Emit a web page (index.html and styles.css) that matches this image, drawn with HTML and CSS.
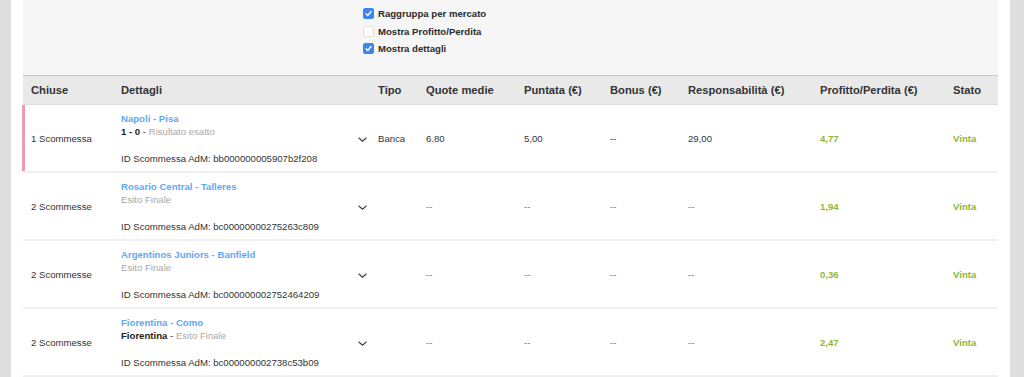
FILE: index.html
```html
<!DOCTYPE html>
<html lang="it">
<head>
  <meta charset="UTF-8" />
  <title>Scommesse chiuse</title>
  <link rel="stylesheet" href="styles.css">
</head>
<body>
  <div class="page">
    <div class="filters">
      <label class="check"><span class="box on"><svg viewBox="0 0 10 10"><path d="M2.3 5.2 L4.2 7.2 L7.8 2.8" /></svg></span>Raggruppa per mercato</label>
      <label class="check"><span class="box"></span>Mostra Profitto/Perdita</label>
      <label class="check"><span class="box on"><svg viewBox="0 0 10 10"><path d="M2.3 5.2 L4.2 7.2 L7.8 2.8" /></svg></span>Mostra dettagli</label>
    </div>

    <div class="table">
      <div class="row head">
        <div class="cell">Chiuse</div>
        <div class="cell">Dettagli</div>
        <div class="cell toggle"></div>
        <div class="cell">Tipo</div>
        <div class="cell">Quote medie</div>
        <div class="cell">Puntata (€)</div>
        <div class="cell">Bonus (€)</div>
        <div class="cell">Responsabilità (€)</div>
        <div class="cell">Profitto/Perdita (€)</div>
        <div class="cell">Stato</div>
      </div>

      <div class="row open">
        <div class="cell">1 Scommessa</div>
        <div class="cell details">
          <a class="event">Napoli - Pisa</a>
          <div class="market"><b>1 - 0</b> - <span>Risultato esatto</span></div>
          <div class="bet-id">ID Scommessa AdM: bb000000005907b2f208</div>
        </div>
        <div class="cell toggle"><svg viewBox="0 0 12 8"><path d="M1.5 2 L6 6 L10.5 2" /></svg></div>
        <div class="cell">Banca</div>
        <div class="cell">6.80</div>
        <div class="cell">5,00</div>
        <div class="cell">--</div>
        <div class="cell">29,00</div>
        <div class="cell win">4,77</div>
        <div class="cell win">Vinta</div>
      </div>

      <div class="row">
        <div class="cell">2 Scommesse</div>
        <div class="cell details">
          <a class="event">Rosario Central - Talleres</a>
          <div class="market"><span>Esito Finale</span></div>
          <div class="bet-id">ID Scommessa AdM: bc00000000275263c809</div>
        </div>
        <div class="cell toggle"><svg viewBox="0 0 12 8"><path d="M1.5 2 L6 6 L10.5 2" /></svg></div>
        <div class="cell"></div>
        <div class="cell dash">--</div>
        <div class="cell dash">--</div>
        <div class="cell dash">--</div>
        <div class="cell dash">--</div>
        <div class="cell win">1,94</div>
        <div class="cell win">Vinta</div>
      </div>

      <div class="row">
        <div class="cell">2 Scommesse</div>
        <div class="cell details">
          <a class="event">Argentinos Juniors - Banfield</a>
          <div class="market"><span>Esito Finale</span></div>
          <div class="bet-id">ID Scommessa AdM: bc000000002752464209</div>
        </div>
        <div class="cell toggle"><svg viewBox="0 0 12 8"><path d="M1.5 2 L6 6 L10.5 2" /></svg></div>
        <div class="cell"></div>
        <div class="cell dash">--</div>
        <div class="cell dash">--</div>
        <div class="cell dash">--</div>
        <div class="cell dash">--</div>
        <div class="cell win">0,36</div>
        <div class="cell win">Vinta</div>
      </div>

      <div class="row">
        <div class="cell">2 Scommesse</div>
        <div class="cell details">
          <a class="event">Fiorentina - Como</a>
          <div class="market"><b>Fiorentina</b> - <span>Esito Finale</span></div>
          <div class="bet-id">ID Scommessa AdM: bc000000002738c53b09</div>
        </div>
        <div class="cell toggle"><svg viewBox="0 0 12 8"><path d="M1.5 2 L6 6 L10.5 2" /></svg></div>
        <div class="cell"></div>
        <div class="cell dash">--</div>
        <div class="cell dash">--</div>
        <div class="cell dash">--</div>
        <div class="cell dash">--</div>
        <div class="cell win">2,47</div>
        <div class="cell win">Vinta</div>
      </div>
    </div>
  </div>
</body>
</html>
```

FILE: styles.css
```css
body {
  margin: 0;
  background: #dedede;
  font-family: "Liberation Sans", Arial, sans-serif;
  font-size: 9.6px;
  color: #333;
  height: 377px;
  overflow: hidden;
}

.page {
  margin: 0 14px 0 11px;
  padding: 0 12px;
  background: #fff;
  min-height: 377px;
}

.filters {
  background: #f6f6f6;
  height: 75px;
  box-sizing: border-box;
  padding: 5px 0 0 340px;
  display: flex;
  flex-direction: column;
}

.check {
  display: flex;
  align-items: center;
  gap: 4px;
  height: 17.5px;
  font-weight: bold;
  color: #2b2b2b;
}

.box {
  width: 9px;
  height: 9px;
  border-radius: 2px;
  background: #fff;
  border: 1px solid #e2e2e2;
  display: flex;
}

.box.on {
  background: #3d86ee;
  border-color: #3d86ee;
}

.box svg {
  width: 9px;
  height: 9px;
  fill: none;
  stroke: #fff;
  stroke-width: 1.5;
  stroke-linecap: round;
  stroke-linejoin: round;
}

.row {
  display: grid;
  grid-template-columns: 90px 242px 15px 48px 98px 86px 78px 132px 133px 52px;
  align-items: center;
  height: 68px;
  box-sizing: border-box;
  border-bottom: 2px solid #efefef;
}

.row.head {
  height: 30px;
  background: #e9e9ea;
  border-top: 1px solid #c9c9ca;
  border-bottom: 1px solid #dcdcdc;
  font-size: 11.2px;
  font-weight: bold;
  color: #333;
}

.row.open {
  box-shadow: inset 3px 0 0 #ec9cad;
  margin-left: -1px;
  padding-left: 1px;
}

.cell {
  padding-left: 8px;
  white-space: nowrap;
}

.cell.toggle {
  padding-left: 0;
  display: flex;
  justify-content: center;
  padding-top: 3px;
}

.toggle svg {
  width: 11px;
  height: 7px;
  fill: none;
  stroke: #3a3a3a;
  stroke-width: 1.3;
}

.details {
  line-height: 13px;
  align-self: start;
  padding-top: 7px;
}

.event {
  display: block;
  color: #5fa8f4;
  font-weight: bold;
}

.market b {
  color: #222;
}

.market span {
  color: #a9a9a9;
}

.bet-id {
  margin-top: 14px;
  color: #333;
}

.dash {
  color: #777;
}

.win {
  color: #8fb735;
  font-weight: bold;
}
```
